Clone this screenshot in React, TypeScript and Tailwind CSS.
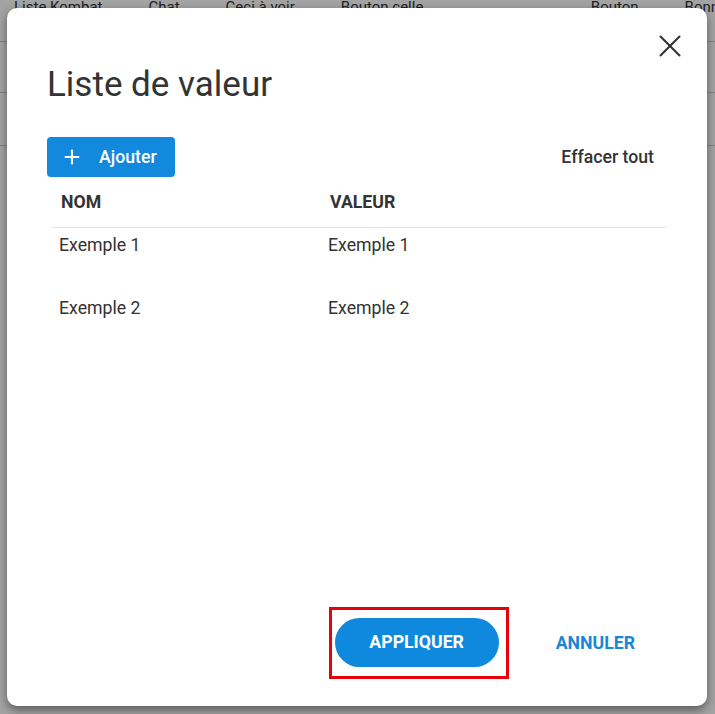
import { X, Plus } from 'lucide-react';

const rows = [
  { nom: 'Exemple 1', valeur: 'Exemple 1' },
  { nom: 'Exemple 2', valeur: 'Exemple 2' },
];

function BackgroundPage() {
  return (
    <div className="flex h-full w-full flex-col bg-white text-[15px] text-[#333]">
      <div className="-mt-[3px] flex h-[20px] items-center gap-[46px] whitespace-nowrap pl-[14px] leading-[20px]">
        <span>Liste Kombat</span>
        <span>Chat</span>
        <span>Ceci à voir</span>
        <span>Bouton celle</span>
        <span className="ml-auto">Bouton</span>
        <span className="-mr-[20px]">Bonnée</span>
      </div>
      <div className="h-[25px] border-b border-[#ccc]" />
      <div className="h-[51px] border-b border-[#ccc]" />
      <div className="h-[53px] border-b border-[#ccc]" />
      <div className="flex-1" />
    </div>
  );
}

export default function App() {
  return (
    <div
      className="relative h-[714px] w-[715px] overflow-hidden"
      style={{ fontFamily: 'Roboto, "Liberation Sans", sans-serif' }}
    >
      <BackgroundPage />
      <div className="absolute inset-0 bg-black/[0.36]" />

      <div className="absolute left-[7px] top-[8px] flex h-[698px] w-[700px] flex-col rounded-[10px] bg-white shadow-[0_4px_10px_rgba(0,0,0,0.45)]">
        <div className="flex justify-end pr-[27px] pt-[28px]">
          <button className="flex h-[20px] w-[20px] items-center justify-center text-[#333]">
            <X size={38} strokeWidth={1.3} className="shrink-0" />
          </button>
        </div>

        <h1 className="mt-[9px] pl-[40px] text-[35px] font-normal leading-[40px] text-[#333]">
          Liste de valeur
        </h1>

        <div className="mt-[32px] flex items-center justify-between pl-[40px] pr-[53px] text-[17.7px]">
          <button className="flex h-[40px] w-[128px] items-center gap-[16px] rounded-[4px] bg-[#1289dc] pl-[14px] font-medium text-white">
            <Plus size={22} strokeWidth={2.3} />
            <span>Ajouter</span>
          </button>
          <button className="font-medium text-[#333]">Effacer tout</button>
        </div>

        <div className="ml-[44px] mr-[40px] mt-[1px] flex flex-col text-[17.7px] text-[#333]">
          <div className="flex h-[50px] items-center border-b border-[#e3e3e3] font-bold">
            <div className="w-[269px] pl-[10px]">NOM</div>
            <div className="flex-1 pl-[10px]">VALEUR</div>
          </div>
          {rows.map((r) => (
            <div key={r.nom} className="flex h-[63px] items-start pt-[4px]">
              <div className="w-[269px] pl-[8px]">{r.nom}</div>
              <div className="flex-1 pl-[8px]">{r.valeur}</div>
            </div>
          ))}
        </div>

        <div className="flex-1" />

        <div className="mb-[27px] flex items-center justify-end pr-[72px] text-[17.7px]">
          <div className="border-[3px] border-[#e8000b] pb-[9px] pl-[3px] pr-[7px] pt-[8px]">
            <button className="h-[49px] w-[164px] rounded-full bg-[#0e89de] font-bold text-white">
              APPLIQUER
            </button>
          </div>
          <button className="ml-[47px] font-bold text-[#1a86d6]">ANNULER</button>
        </div>
      </div>
    </div>
  );
}
